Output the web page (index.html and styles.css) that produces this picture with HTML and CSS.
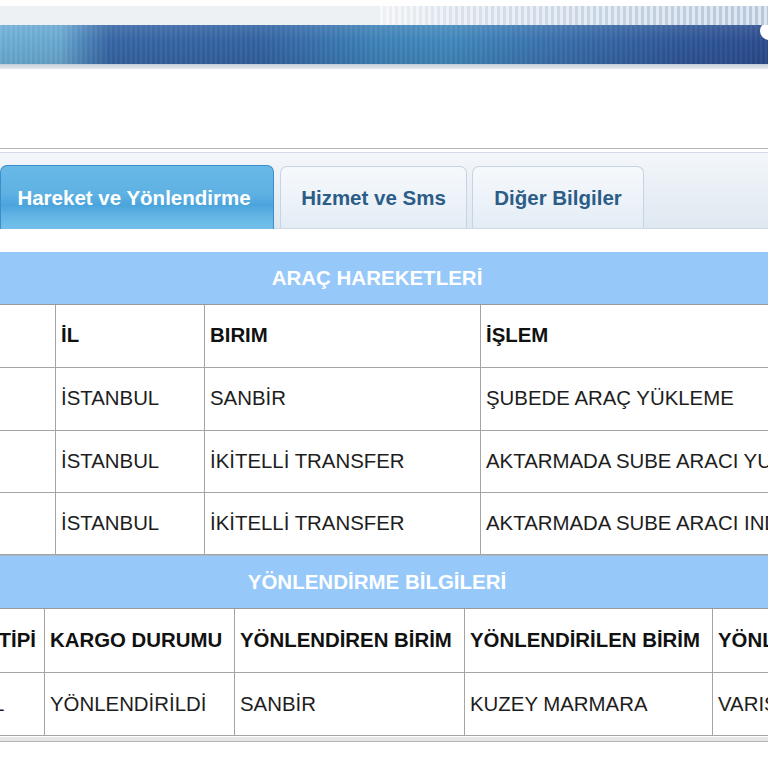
FILE: index.html
```html
<!DOCTYPE html>
<html lang="tr">
<head>
<meta charset="utf-8">
<title>Kargo Takip</title>
<link rel="stylesheet" href="styles.css">
</head>
<body>
<header class="banner">
  <div class="banner-top"><div class="banner-stripes"></div></div>
  <div class="banner-bar"><span class="banner-logo"></span></div>
  <div class="banner-shadow"></div>
</header>

<nav class="tabbar">
  <div class="tabs">
    <div class="tab tab-active tab-1">Hareket ve Yönlendirme</div>
    <div class="tab tab-2">Hizmet ve Sms</div>
    <div class="tab tab-3">Diğer Bilgiler</div>
  </div>
</nav>

<section class="block block-1">
  <div class="section-title">ARAÇ HAREKETLERİ</div>
  <div class="table-clip">
    <table class="grid grid-1">
      <colgroup>
        <col class="c-100"><col class="c-149"><col class="c-276"><col class="c-420">
      </colgroup>
      <tr class="head r62">
        <th></th><th>İL</th><th>BIRIM</th><th>İŞLEM</th>
      </tr>
      <tr class="r63">
        <td></td><td>İSTANBUL</td><td>SANBİR</td><td>ŞUBEDE ARAÇ YÜKLEME</td>
      </tr>
      <tr class="r62">
        <td></td><td>İSTANBUL</td><td>İKİTELLİ TRANSFER</td><td>AKTARMADA SUBE ARACI YUKLEME</td>
      </tr>
      <tr class="r62">
        <td></td><td>İSTANBUL</td><td>İKİTELLİ TRANSFER</td><td>AKTARMADA SUBE ARACI INDIRME</td>
      </tr>
    </table>
  </div>
</section>

<section class="block block-2">
  <div class="section-title">YÖNLENDİRME BİLGİLERİ</div>
  <div class="table-clip">
    <table class="grid grid-2">
      <colgroup>
        <col class="c-133"><col class="c-190"><col class="c-230"><col class="c-248"><col class="c-300">
      </colgroup>
      <tr class="head r64">
        <th>KARGO TİPİ</th><th>KARGO DURUMU</th><th>YÖNLENDİREN BİRİM</th><th>YÖNLENDİRİLEN BİRİM</th><th>YÖNLENDİRME NEDENİ</th>
      </tr>
      <tr class="r63">
        <td>NORMAL</td><td>YÖNLENDİRİLDİ</td><td>SANBİR</td><td>KUZEY MARMARA</td><td>VARIS SUBESI</td>
      </tr>
    </table>
  </div>
  <div class="table-foot"></div>
</section>
</body>
</html>
```

FILE: styles.css
```css
html, body {
  margin: 0;
  padding: 0;
  background: #ffffff;
  overflow: hidden;
}

body {
  font-family: "Liberation Sans", Arial, sans-serif;
  font-size: 20px;
  color: #1b1b1b;
  width: 768px;
}

/* ---------- banner ---------- */
.banner {
  padding-top: 6px;
}

.banner-top {
  height: 19px;
  background: #eef1f4;
  display: flex;
  justify-content: flex-end;
}

.banner-stripes {
  width: 388px;
  height: 100%;
  background:
    repeating-linear-gradient(90deg, rgba(255,255,255,0.55) 0 3px, rgba(255,255,255,0) 3px 6px),
    linear-gradient(90deg, #eef1f4 0%, #d9e2ec 20%, #c5d3e3 60%, #b6c7dc 100%);
}

.banner-bar {
  position: relative;
  height: 39px;
  background:
    repeating-linear-gradient(90deg, rgba(255,255,255,0.04) 0 2px, rgba(0,0,0,0.03) 2px 5px),
    linear-gradient(180deg, rgba(255,255,255,0.10) 0%, rgba(255,255,255,0) 40%, rgba(0,0,0,0.08) 100%),
    linear-gradient(90deg,
      #6fb0d8 0px, #6aaad3 60px, #4d85bb 85px, #3767a6 110px,
      #3464a4 260px, #3f84bb 380px, #4289bf 450px,
      #3a70ad 560px, #30589a 680px, #2b4d90 768px);
  overflow: hidden;
}

.banner-logo {
  position: absolute;
  right: -10px;
  top: -3px;
  width: 18px;
  height: 18px;
  border-radius: 50%;
  background: #ffffff;
}

.banner-shadow {
  height: 5px;
  background: linear-gradient(180deg, #c3ccd8, #e6eaef);
}

/* ---------- tabs ---------- */
.tabbar {
  margin-top: 79px;
  border-top: 1px solid #b4b4b4;
  padding-top: 3px;
  background: #ffffff;
}

.tabs {
  display: flex;
  align-items: flex-end;
  gap: 6px;
  height: 75px;
  border-top: 1px solid #d3dce6;
  border-bottom: 1px solid #cfd9e3;
  background: linear-gradient(180deg, #f4f7fa 0%, #eaf0f6 40%, #dfe8f1 100%);
}

.tab {
  height: 62px;
  box-sizing: border-box;
  display: flex;
  align-items: center;
  justify-content: center;
  font-weight: bold;
  font-size: 20.5px;
  color: #2c5d87;
  border: 1px solid #c6d3e0;
  border-bottom: none;
  border-radius: 7px 7px 0 0;
  background: linear-gradient(180deg, #f6f9fc 0%, #edf3f9 50%, #e3ecf5 100%);
}

.tab-1 { width: 274px; padding-right: 6px; }
.tab-2 { width: 187px; }
.tab-3 { width: 172px; margin-left: -1px; }

.tab-active {
  height: 64px;
  margin-bottom: -1px;
  color: #ffffff;
  border-color: #3b8dcc;
  background: linear-gradient(180deg, #69b9e7 0%, #5eb1e3 45%, #4aa4dc 62%, #64b5e5 80%, #74c0ea 100%);
}

/* ---------- sections ---------- */
.block-1 {
  margin-top: 23px;
}

.section-title {
  height: 52px;
  display: flex;
  align-items: center;
  justify-content: center;
  padding-right: 14px;
  background: #96c8fa;
  color: #ffffff;
  font-weight: bold;
  font-size: 20.5px;
  border-bottom: 1px solid #9a9a9a;
}

.block-2 .section-title {
  height: 52px;
  border-top: 1px solid #a8b8c8;
}

.table-clip {
  overflow: hidden;
  width: 768px;
}

.grid {
  border-collapse: collapse;
  table-layout: fixed;
}

.grid-1 {
  width: 945px;
  margin-left: -45px;
}

.grid-2 {
  width: 1101px;
  margin-left: -89px;
}

.c-100 { width: 100px; }
.c-149 { width: 149px; }
.c-276 { width: 276px; }
.c-420 { width: 420px; }
.c-133 { width: 133px; }
.c-190 { width: 190px; }
.c-230 { width: 230px; }
.c-248 { width: 248px; }
.c-300 { width: 300px; }

.grid th,
.grid td {
  border: 1px solid #a4a4a4;
  padding: 0 5px;
  text-align: left;
  vertical-align: middle;
  white-space: nowrap;
  overflow: hidden;
  font-size: 20.4px;
}

.grid tr:first-child th {
  border-top: none;
}

.grid th {
  font-weight: bold;
  color: #111111;
}

.grid td {
  font-weight: normal;
  color: #1d1d1d;
}

.r62 { height: 62px; }
.r63 { height: 63px; }
.r64 { height: 64px; }

.table-foot {
  height: 4px;
  background: #e4e6e8;
  border-bottom: 1px solid #b3b3b3;
  margin-top: 1px;
}
```
